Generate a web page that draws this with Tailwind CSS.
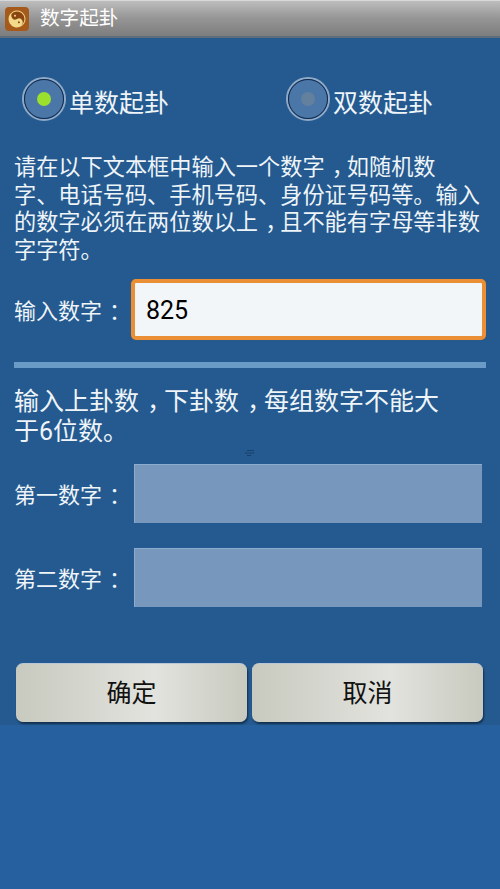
<!DOCTYPE html>
<html lang="zh-Hans">
<head>
<meta charset="UTF-8">
<title>数字起卦</title>
<script src="https://cdn.jsdelivr.net/npm/@tailwindcss/browser@4"></script>
</head>
<body class="w-[500px] h-[889px] overflow-hidden bg-[#26609e] font-['Roboto','Noto_Sans_CJK_SC',sans-serif] text-[#eef4f8] relative">
  <!-- title bar -->
  <header class="h-[38px] flex items-center pl-[5px] bg-gradient-to-b from-[#bdbdbd] via-[#959595] to-[#7d7d7d] border-t border-[#d8d8d8] border-b-2 border-b-[#5f6d7a]">
    <svg class="w-[24px] h-[24px]" viewBox="0 0 24 24">
      <rect width="24" height="24" rx="4" fill="#a55a1c"/>
      <g transform="rotate(-30 12 12)">
        <circle cx="12" cy="12" r="8.5" fill="#f3d98a"/>
        <path d="M12 4.5a7.5 7.5 0 0 1 0 15a3.75 3.75 0 0 0 0-7.5a3.75 3.75 0 0 1 0-7.5z" fill="#8a4510"/>
        <circle cx="12" cy="8.2" r="1" fill="#f3d98a"/>
        <circle cx="12" cy="15.8" r="1" fill="#8a4510"/>
      </g>
    </svg>
    <span class="ml-[11px] text-[19.6px] text-white">数字起卦</span>
  </header>

  <main class="h-[687px] bg-[#245a90] px-[14px] pt-[39px]">
    <!-- radios -->
    <div class="flex h-[44px]">
      <div class="w-[264px] flex items-center pl-[8px]">
        <span class="w-[44px] h-[44px] shrink-0 rounded-full border-2 border-[#8fa9c6] flex items-center justify-center">
          <span class="w-[40px] h-[40px] rounded-full border border-[#12294a] bg-[#4a76a8] flex items-center justify-center">
            <span class="w-[14px] h-[14px] rounded-full bg-[#9be02c]"></span>
          </span>
        </span>
        <span class="ml-[3px] pt-[9px] text-[25px] leading-none">单数起卦</span>
      </div>
      <div class="flex items-center pl-[8px]">
        <span class="w-[44px] h-[44px] shrink-0 rounded-full border-2 border-[#8fa9c6] flex items-center justify-center">
          <span class="w-[40px] h-[40px] rounded-full border border-[#12294a] bg-[#4a76a8] flex items-center justify-center">
            <span class="w-[14px] h-[14px] rounded-full bg-[#64809f]"></span>
          </span>
        </span>
        <span class="ml-[3px] pt-[9px] text-[25px] leading-none">双数起卦</span>
      </div>
    </div>

    <p class="mt-[33px] text-[22.2px] leading-[27.7px] whitespace-nowrap">请在以下文本框中输入一个数字<span class="ml-[0.32em] tracking-[-0.32em]">，</span>如随机数<br>字、电话号码、手机号码、身份证号码等。输入<br>的数字必须在两位数以上<span class="ml-[0.32em] tracking-[-0.32em]">，</span>且不能有字母等非数<br>字字符。</p>

    <div class="mt-[14px] flex items-center">
      <span class="w-[117px] pt-[4px] text-[22px] whitespace-nowrap">输入数字<span class="ml-[0.32em] tracking-[-0.32em]">：</span></span>
      <div class="w-[355px] h-[61px] rounded-[5px] border-[4px] border-[#ea8f35] bg-[#f3f6f9] flex items-center pl-[11px] pt-[3px] text-[25px] text-black shadow-[0_0_1px_#5c5a50]">825</div>
    </div>

    <div class="mt-[22px] h-[6px] bg-[#6a9ac6]"></div>

    <p class="mt-[19px] text-[25px] leading-[30px] whitespace-nowrap">输入上卦数<span class="ml-[0.32em] tracking-[-0.32em]">，</span>下卦数<span class="ml-[0.32em] tracking-[-0.32em]">，</span>每组数字不能大<br>于6位数。</p>

    <div class="mt-[17px] flex items-center">
      <span class="w-[120px] pt-[5px] text-[22px] whitespace-nowrap">第一数字<span class="ml-[0.32em] tracking-[-0.32em]">：</span></span>
      <div class="w-[348px] h-[59px] bg-[#7897bc] border-l border-t border-[#8dabcc]"></div>
    </div>
    <div class="mt-[25px] flex items-center">
      <span class="w-[120px] pt-[5px] text-[22px] whitespace-nowrap">第二数字<span class="ml-[0.32em] tracking-[-0.32em]">：</span></span>
      <div class="w-[348px] h-[59px] bg-[#7897bc] border-l border-t border-[#8dabcc]"></div>
    </div>

    <div class="mt-[56px] ml-[2px] flex gap-[5px]">
      <button class="w-[231px] h-[59px] rounded-[7px] border-t border-[#b9c7d6] pt-[2px] text-[25px] text-[#111] bg-gradient-to-r from-[#c8cabf] via-[#e2e3de] via-60% to-[#c8cabf] shadow-[1px_2px_2px_#14304f]">确定</button>
      <button class="w-[231px] h-[59px] rounded-[7px] border-t border-[#b9c7d6] pt-[2px] text-[25px] text-[#111] bg-gradient-to-r from-[#c8cabf] via-[#e2e3de] via-60% to-[#c8cabf] shadow-[1px_2px_2px_#14304f]">取消</button>
    </div>
  </main>

  <!-- small smudge above the first field -->
  <svg class="absolute left-[244px] top-[449px] w-[12px] h-[9px]" viewBox="0 0 12 9">
    <path d="M3 1.5h7M1 4h9M3 6.5h4" stroke="#173f6b" stroke-width="1" fill="none"/>
  </svg>
</body>
</html>
